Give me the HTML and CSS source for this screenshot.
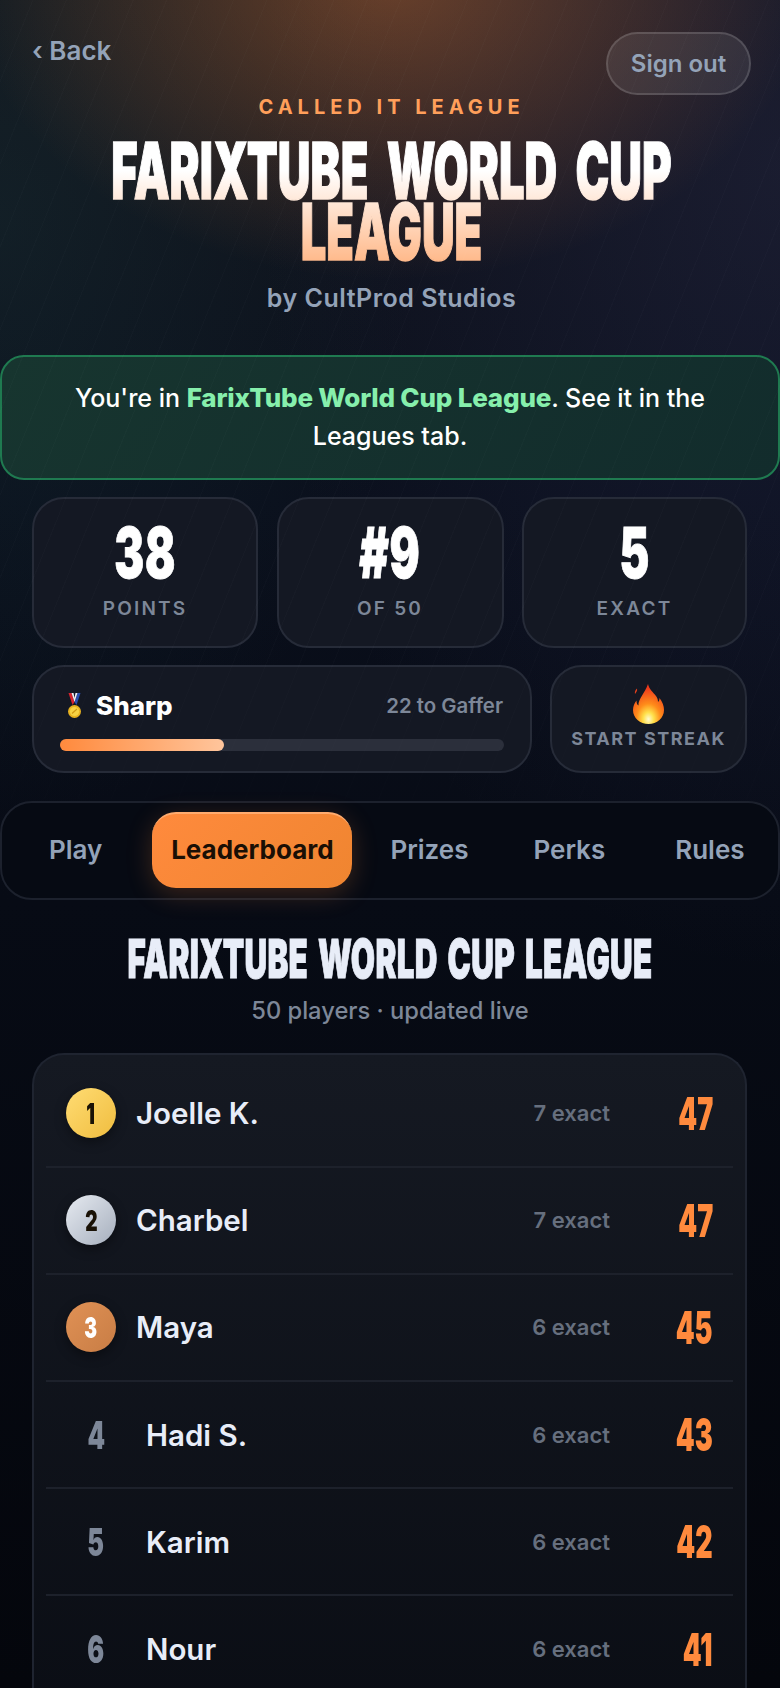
FILE: index.html
```html
<!DOCTYPE html>
<html lang="en">

<head>
    <meta charset="UTF-8">
    <meta name="viewport" content="width=device-width, initial-scale=1.0">
    <title>FarixTube World Cup League</title>
    <link rel="stylesheet" href="styles.css">
</head>

<body>
    <div class="page">
        <header class="hero">
            <div class="top_bar">
                <a class="back">‹ Back</a>
                <button class="sign_out">Sign out</button>
            </div>
            <p class="eyebrow">CALLED IT LEAGUE</p>
            <h1 class="hero_title">FARIXTUBE WORLD CUP<br>LEAGUE</h1>
            <p class="byline">by CultProd Studios</p>
        </header>

        <div class="banner">You're in <b>FarixTube World Cup League</b>. See it in the Leagues tab.</div>

        <section class="stats">
            <div class="stat_card"><span class="stat_num">38</span><span class="stat_label">POINTS</span></div>
            <div class="stat_card"><span class="stat_num">#9</span><span class="stat_label">OF 50</span></div>
            <div class="stat_card"><span class="stat_num">5</span><span class="stat_label">EXACT</span></div>
        </section>

        <section class="level_row">
            <div class="level_card">
                <div class="level_head">
                    <span class="level_name">
                        <svg class="medal" viewBox="0 0 13 26">
                            <path d="M0.5 0h3l3 9-2 3z" fill="#d8232e"/>
                            <path d="M12.5 0h-3l-3 9 2 3z" fill="#2a4fb0"/>
                            <path d="M3.5 0h2l1 5 1-5h2l-3 9z" fill="#f1f1f4"/>
                            <circle cx="6.5" cy="18.5" r="6.5" fill="#e8b21f"/>
                            <circle cx="6.5" cy="18.5" r="4.6" fill="#f7d343"/>
                            <path d="M4 20.5l5-4.5" stroke="#d19a14" stroke-width="1.2"/>
                        </svg>
                        Sharp
                    </span>
                    <span class="level_next">22 to Gaffer</span>
                </div>
                <div class="bar"><div class="bar_fill" style="width: 37%"></div></div>
            </div>
            <div class="streak_card">
                <svg class="flame" viewBox="0 0 31 40">
                    <defs>
                        <radialGradient id="flame_fill" cx="50%" cy="88%" r="78%">
                            <stop offset="0" stop-color="#fffbd0"/>
                            <stop offset="0.22" stop-color="#ffe04a"/>
                            <stop offset="0.5" stop-color="#ff8c1a"/>
                            <stop offset="1" stop-color="#ee3a1c"/>
                        </radialGradient>
                    </defs>
                    <path d="M15 0c1 5 5 8 8 12 1.500 2 2 4 2 6 1-1 1.500-2 1.500-4 3 4 4.500 8 4.500 12 0 8-7 14-15.500 14S0 34 0 26c0-4 1.500-7 3.500-9.500 0 2.500.5 4 2 5C5 15 12 9 15 0z" fill="url(#flame_fill)"/>
                    <path d="M4 4.500c.5 2-.5 3.500-2 5.500-.5-2 .3-4 2-5.500z" fill="#e8401c"/>
                </svg>
                <span class="streak_label">START STREAK</span>
            </div>
        </section>

        <nav class="tabs">
            <a class="tab">Play</a>
            <a class="tab tab_active">Leaderboard</a>
            <a class="tab">Prizes</a>
            <a class="tab">Perks</a>
            <a class="tab">Rules</a>
        </nav>

        <section class="board">
            <h2 class="board_title">FARIXTUBE WORLD CUP LEAGUE</h2>
            <p class="board_sub">50 players · updated live</p>

            <div class="board_card">
                <div class="row">
                    <span class="rank gold"><i>1</i></span>
                    <span class="name">Joelle K.</span>
                    <span class="exact">7 exact</span>
                    <span class="score"><i>47</i></span>
                </div>
                <div class="row">
                    <span class="rank silver"><i>2</i></span>
                    <span class="name">Charbel</span>
                    <span class="exact">7 exact</span>
                    <span class="score"><i>47</i></span>
                </div>
                <div class="row">
                    <span class="rank bronze"><i>3</i></span>
                    <span class="name">Maya</span>
                    <span class="exact">6 exact</span>
                    <span class="score"><i>45</i></span>
                </div>
                <div class="row">
                    <span class="rank plain"><i>4</i></span>
                    <span class="name">Hadi S.</span>
                    <span class="exact">6 exact</span>
                    <span class="score"><i>43</i></span>
                </div>
                <div class="row">
                    <span class="rank plain"><i>5</i></span>
                    <span class="name">Karim</span>
                    <span class="exact">6 exact</span>
                    <span class="score"><i>42</i></span>
                </div>
                <div class="row">
                    <span class="rank plain"><i>6</i></span>
                    <span class="name">Nour</span>
                    <span class="exact">6 exact</span>
                    <span class="score"><i>41</i></span>
                </div>
            </div>
        </section>
    </div>
</body>

</html>
```

FILE: styles.css
```css
* {
    box-sizing: border-box;
}

html, body {
    margin: 0;
    height: 1688px;
    overflow: hidden;
}

body {
    font-family: Inter, "Liberation Sans", sans-serif;
    color: #fff;
    background-color: #05070f;
}

.page {
    position: relative;
    height: 1688px;
    overflow: hidden;
    background-image:
        radial-gradient(ellipse 420px 300px at 50% -20px, rgba(255, 138, 61, 0.36), rgba(255, 138, 61, 0)),
        radial-gradient(ellipse 520px 800px at 100% 170px, rgba(60, 60, 110, 0.24), rgba(60, 60, 110, 0)),
        radial-gradient(ellipse 420px 600px at 0 220px, rgba(30, 70, 70, 0.25), rgba(30, 70, 70, 0)),
        linear-gradient(180deg, #12141c 0, #0a0f1c 500px, #070b15 900px, #04060c 1688px);
}

/* faint diagonal lines, lying over the top part of the page */
.page::after {
    content: "";
    position: absolute;
    top: 0;
    left: 0;
    right: 0;
    height: 900px;
    pointer-events: none;
    background-image: repeating-linear-gradient(112deg, rgba(255, 255, 255, 0) 0 30px, rgba(255, 255, 255, 0.016) 30px 31px);
    -webkit-mask-image: linear-gradient(180deg, #000 70%, transparent);
}

/* hero */
.hero {
    padding: 32px 29px 0 32px;
    text-align: center;
}

.top_bar {
    display: flex;
    justify-content: space-between;
    align-items: flex-start;
    height: 63px;
}

.back {
    font-size: 26px;
    font-weight: 600;
    line-height: 38px;
    color: #94a3b8;
}

.sign_out {
    width: 145px;
    height: 63px;
    border-radius: 32px;
    border: 2px solid rgba(255, 255, 255, 0.14);
    background: rgba(255, 255, 255, 0.08);
    color: #94a3b8;
    font-family: inherit;
    font-size: 24px;
    font-weight: 600;
}

.eyebrow {
    margin: -1.5px 0 0;
    font-size: 20px;
    line-height: 26px;
    font-weight: 700;
    letter-spacing: 5px;
    color: #ff9f5a;
}

/* the big condensed headings are Inter Black squeezed sideways */
.hero_title {
    margin: 20px -200px 0;
    white-space: nowrap;
    font-size: 78px;
    line-height: 61px;
    font-weight: 900;
    word-spacing: 16px;
    transform: scaleX(0.58);
    -webkit-text-stroke: 1.5px transparent;
    background: linear-gradient(180deg, #fff 0, #fff 25%, #ffb98a 100%);
    -webkit-background-clip: text;
    background-clip: text;
    color: transparent;
}

.byline {
    margin: 19px 0 0;
    font-size: 25px;
    line-height: 34px;
    font-weight: 600;
    letter-spacing: 0.5px;
    color: #94a3b8;
}

/* banner */
.banner {
    margin-top: 40px;
    height: 125px;
    padding: 22px 40px;
    border: 2px solid #1f7a50;
    border-radius: 24px;
    background: linear-gradient(135deg, #17352f, #122c2c);
    text-align: center;
    font-size: 25px;
    line-height: 38px;
    font-weight: 500;
}

.banner b {
    font-size: 26px;
    font-weight: 800;
    letter-spacing: -0.2px;
    color: #86efac;
}

/* stats */
.stats {
    display: grid;
    grid-template-columns: 226px 227px 225px;
    column-gap: 18.500px;
    margin: 17px 33px 0 32px;
}

.stat_card, .level_card, .streak_card {
    border: 2px solid #262b38;
    background: #141823;
    border-radius: 32px;
}

.stat_card {
    height: 151px;
    display: flex;
    flex-direction: column;
    align-items: center;
    padding-top: 24px;
}

.stat_num {
    font-size: 70px;
    line-height: 60px;
    font-weight: 900;
    letter-spacing: 1px;
    transform: scaleX(0.64);
    -webkit-text-stroke: 1px #fff;
}

.stat_label {
    margin-top: 14px;
    font-size: 19px;
    line-height: 24px;
    font-weight: 600;
    letter-spacing: 2.200px;
    color: #7d8798;
}

/* level row */
.level_row {
    display: flex;
    gap: 18px;
    margin: 17px 33px 0 32px;
}

.level_card {
    flex: 1;
    height: 108px;
    padding: 22px 26px 0;
}

.level_head {
    display: flex;
    justify-content: space-between;
    align-items: center;
    height: 34px;
}

.level_name {
    display: flex;
    align-items: center;
    gap: 15px;
    font-size: 26px;
    font-weight: 800;
}

.medal {
    width: 13px;
    height: 26px;
    margin-left: 8px;
}

.level_next {
    margin-right: 1px;
    font-size: 20.400px;
    font-weight: 600;
    color: #7d8798;
}

.bar {
    margin-top: 16px;
    height: 12px;
    border-radius: 6px;
    background: #2b2f3b;
}

.bar_fill {
    height: 100%;
    border-radius: 6px;
    background: linear-gradient(90deg, #ff8a3d, #ffc59c);
}

.streak_card {
    width: 197px;
    height: 108px;
    display: flex;
    flex-direction: column;
    align-items: center;
    padding-top: 17px;
}

.flame {
    width: 31px;
    height: 40px;
    flex: none;
}

.streak_label {
    font-size: 18px;
    line-height: 24px;
    margin-top: 3px;
    font-weight: 700;
    letter-spacing: 1.500px;
    color: #7d8798;
}

/* tabs */
.tabs {
    display: flex;
    align-items: center;
    gap: 25px;
    margin-top: 28px;
    height: 99px;
    padding-left: 27px;
    border: 2px solid #1c212d;
    border-radius: 32px;
    background: #060a13;
}

.tab {
    padding: 0 20px 2px;
    font-size: 26px;
    font-weight: 600;
    color: #94a3b8;
}

.tab:last-child {
    margin-left: 5px;
}

.tab_active {
    flex: none;
    width: 200px;
    height: 76px;
    margin: 0 -7px 0 5px;
    padding: 0;
    line-height: 72px;
    text-align: center;
    border-radius: 24px;
    background: linear-gradient(135deg, #ff8a3d, #ef8530);
    border-top: 2px solid #ffab6e;
    color: #1a0f05;
    font-weight: 700;
    box-shadow: 0 6px 26px rgba(255, 138, 61, 0.22);
}

/* leaderboard */
.board_title {
    margin: 38px -100px 0;
    text-align: center;
    white-space: nowrap;
    font-size: 54px;
    line-height: 42px;
    font-weight: 900;
    letter-spacing: 0.5px;
    word-spacing: 6px;
    transform: scaleX(0.58);
    -webkit-text-stroke: 1px #e8edf8;
    color: #e8edf8;
}

.board_sub {
    margin: 15px 0 0;
    text-align: center;
    font-size: 23.700px;
    line-height: 32px;
    font-weight: 500;
    color: #7d8798;
}

.board_card {
    margin: 26px 33px 0 32px;
    padding: 6px 12px 0;
    height: 700px;
    border: 2px solid #1f2430;
    border-bottom: 0;
    border-radius: 32px 32px 0 0;
    background: linear-gradient(180deg, #151922, #0a0d14);
}

.row {
    display: flex;
    align-items: center;
    height: 107.200px;
    padding: 0 20px;
    border-bottom: 2px solid #1d212b;
}

.rank {
    flex: none;
    width: 50px;
    height: 50px;
    border-radius: 50%;
    display: flex;
    align-items: center;
    justify-content: center;
    font-size: 29px;
    font-weight: 900;
    box-shadow: 0 4px 12px rgba(0, 0, 0, 0.4);
}

.rank i {
    font-style: normal;
    transform: scaleX(0.66);
}

.gold {
    background: linear-gradient(135deg, #ffdc73, #f0bd3f);
    color: #1a1206;
}

.silver {
    background: linear-gradient(135deg, #e6eaf1, #a6afbd);
    color: #1a1206;
}

.bronze {
    background: linear-gradient(135deg, #e09155, #c87d45);
    color: #fff;
}

.plain {
    width: 60px;
    background: none;
    box-shadow: none;
    color: #7d8798;
    font-size: 38px;
}

.name {
    flex: 1;
    margin-left: 20px;
    font-size: 29.500px;
    font-weight: 600;
    color: #e8edf8;
}

.exact {
    font-size: 22px;
    font-weight: 600;
    color: #666f7e;
}

.score {
    width: 103px;
    text-align: right;
    font-size: 45px;
    font-weight: 900;
    color: #ff8a3d;
}

.score i {
    display: inline-block;
    font-style: normal;
    transform: scaleX(0.6);
    transform-origin: right center;
}
```
